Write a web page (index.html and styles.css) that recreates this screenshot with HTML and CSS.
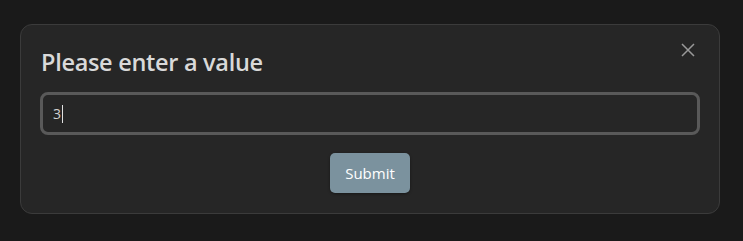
FILE: index.html
```html
<!DOCTYPE html>
<html>
<head>
<meta charset="utf-8">
<link rel="stylesheet" href="styles.css">
</head>
<body>
<div class="dialog">
  <button class="close" aria-label="Close">
    <svg width="14" height="14" viewBox="0 0 14 14"><path d="M1 1 L13 13 M13 1 L1 13" stroke="#999999" stroke-width="1.5" fill="none"/></svg>
  </button>
  <h2 class="title">Please enter a value</h2>
  <div class="field"><span class="value">3</span><span class="caret"></span></div>
  <div class="actions"><button class="submit">Submit</button></div>
</div>
</body>
</html>
```
FILE: styles.css
```css
html, body { margin: 0; padding: 0; }
body {
  background: #1a1a1a;
  width: 743px;
  height: 241px;
  font-family: "Open Sans", "Noto Sans", sans-serif;
  padding: 24px 0 0 20px;
  box-sizing: border-box;
}
.dialog {
  position: relative;
  width: 700px;
  height: 190px;
  box-sizing: border-box;
  background: #262626;
  border: 1px solid #3b3b3b;
  border-radius: 12px;
  padding: 21px 19px 0 19px;
}
.close {
  position: absolute;
  top: 18px;
  right: 24px;
  background: none;
  border: 0;
  padding: 0;
  width: 14px;
  height: 14px;
  display: flex;
}
.title {
  margin: 0;
  font-size: 23.5px;
  font-weight: 600;
  color: #d9d9d9;
  line-height: 32px;
  height: 46px;
  letter-spacing: -0.3px;
  padding-left: 1px;
}
.field {
  height: 43px;
  box-sizing: border-box;
  border: 3px solid #595959;
  border-radius: 8px;
  display: flex;
  align-items: center;
  padding-left: 10px;
  color: #d0d0d0;
  font-size: 14px;
}
.caret {
  width: 1px;
  height: 18px;
  background: #e0e0e0;
  margin-left: 1px;
}
.actions {
  display: flex;
  justify-content: center;
  padding-top: 18px;
}
.submit {
  width: 80px;
  height: 40px;
  border: 0;
  border-radius: 5px;
  background: #7b929e;
  color: #ffffff;
  font-family: "Open Sans", "Noto Sans", sans-serif;
  font-size: 15px;
  box-shadow: 0 1px 3px rgba(0,0,0,0.4);
}
```
